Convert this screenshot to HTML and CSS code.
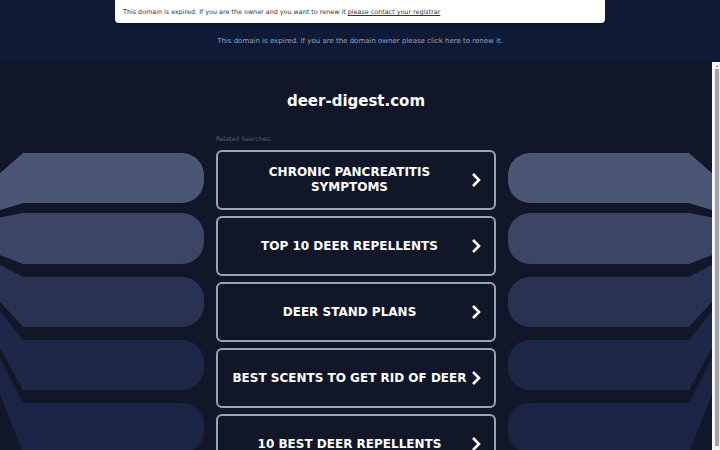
FILE: index.html
```html
<!DOCTYPE html>
<html lang="en">

<head>
    <meta charset="utf-8" />
    <title>deer-digest.com</title>
    <link rel="stylesheet" href="styles.css">
</head>

<body>
    <header class="topBar">
        <div class="notice">This domain is expired. If you are the owner and you want to renew it <a href="#">please contact your registrar</a></div>
        <p class="renew">This domain is expired. If you are the domain owner please click here to renew it.</p>
    </header>
    <div class="frame">
        <main class="scroller">
            <h1 class="siteName">deer-digest.com</h1>
            <div class="listing">
                <p class="related">Related Searches:</p>
                <svg class="deco" viewBox="0 0 216 324" width="216" height="324">
                    <!-- bands fan out from one point off the left edge -->
                    <path fill="#4b5675" d="M-65 80 L23 3 H182 A22 22 0 0 1 204 25 V31 A22 22 0 0 1 182 53 H23 Z" />
                    <path fill="#3c4566" d="M-65 80 L23 63 H182 A22 22 0 0 1 204 85 V92 A22 22 0 0 1 182 114 H23 Z" />
                    <path fill="#2a3253" d="M-65 80 L23 127 H182 A22 22 0 0 1 204 149 V155 A22 22 0 0 1 182 177 H23 Z" />
                    <path fill="#1f2748" d="M-65 80 L23 190 H182 A22 22 0 0 1 204 212 V218 A22 22 0 0 1 182 240 H23 Z" />
                    <path fill="#1c2446" d="M-65 80 L23 253 H182 A22 22 0 0 1 204 275 V281 A22 22 0 0 1 182 303 H23 Z" />
                </svg>
                <div class="results">
                    <a class="result" href="#"><span>CHRONIC PANCREATITIS SYMPTOMS</span><svg class="chev" viewBox="0 0 10 16"><path d="M2 2 L8 8 L2 14" /></svg></a>
                    <a class="result" href="#"><span>TOP 10 DEER REPELLENTS</span><svg class="chev" viewBox="0 0 10 16"><path d="M2 2 L8 8 L2 14" /></svg></a>
                    <a class="result" href="#"><span>DEER STAND PLANS</span><svg class="chev" viewBox="0 0 10 16"><path d="M2 2 L8 8 L2 14" /></svg></a>
                    <a class="result" href="#"><span>BEST SCENTS TO GET RID OF DEER</span><svg class="chev" viewBox="0 0 10 16"><path d="M2 2 L8 8 L2 14" /></svg></a>
                    <a class="result" href="#"><span>10 BEST DEER REPELLENTS</span><svg class="chev" viewBox="0 0 10 16"><path d="M2 2 L8 8 L2 14" /></svg></a>
                </div>
                <svg class="deco flip" viewBox="0 0 216 324" width="216" height="324">
                    <path fill="#4b5675" d="M-65 80 L23 3 H182 A22 22 0 0 1 204 25 V31 A22 22 0 0 1 182 53 H23 Z" />
                    <path fill="#3c4566" d="M-65 80 L23 63 H182 A22 22 0 0 1 204 85 V92 A22 22 0 0 1 182 114 H23 Z" />
                    <path fill="#2a3253" d="M-65 80 L23 127 H182 A22 22 0 0 1 204 149 V155 A22 22 0 0 1 182 177 H23 Z" />
                    <path fill="#1f2748" d="M-65 80 L23 190 H182 A22 22 0 0 1 204 212 V218 A22 22 0 0 1 182 240 H23 Z" />
                    <path fill="#1c2446" d="M-65 80 L23 253 H182 A22 22 0 0 1 204 275 V281 A22 22 0 0 1 182 303 H23 Z" />
                </svg>
            </div>
        </main>
        <div class="scrollbar">
            <div class="arrowUp"></div>
            <div class="thumb"></div>
        </div>
    </div>
</body>

</html>
```

FILE: styles.css
```css
body {
    margin: 0;
    height: 450px;
    overflow: hidden;
    background: #111729;
    font-family: 'DejaVu Sans', sans-serif;
}

.topBar {
    height: 62px;
    background: #0f1a36;
    overflow: hidden;
}

.notice {
    width: 474px;
    height: 23px;
    margin: 0 auto;
    padding: 0 8px;
    background: #ffffff;
    border-radius: 0 0 4px 4px;
    box-shadow: 0 1px 3px rgba(0, 0, 0, 0.5);
    font-size: 6.4px;
    line-height: 24px;
    color: #333333;
}

.notice a {
    color: #333333;
}

.renew {
    margin: 14px 0 0;
    text-align: center;
    font-size: 7px;
    color: #9aa3bb;
}

.frame {
    display: flex;
    height: 388px;
}

.scroller {
    flex: 1;
    overflow: hidden;
}

.scrollbar {
    width: 8px;
    display: flex;
    flex-direction: column;
    align-items: center;
    background: #f3f3f3;
    border-left: 1px solid #fbfbfb;
    box-sizing: border-box;
}

.arrowUp {
    margin: 3px 0 2px;
    width: 0;
    height: 0;
    border-left: 2px solid transparent;
    border-right: 2px solid transparent;
    border-bottom: 2px solid #a4a4a4;
}

.thumb {
    width: 4px;
    flex: 1;
    margin-bottom: 4px;
    background: #a4a4a4;
}

.siteName {
    margin: 0;
    padding-top: 29px;
    text-align: center;
    font-size: 15px;
    line-height: 20px;
    color: #ffffff;
}

.listing {
    display: grid;
    grid-template-columns: 1fr 280px 1fr;
}

.related {
    grid-column: 2;
    margin: 24px 0 8px;
    font-size: 6.2px;
    color: #56607c;
}

.deco {
    grid-row: 2;
    display: block;
}

.deco.flip {
    transform: scaleX(-1);
}

.results {
    grid-row: 2;
    grid-column: 2;
    display: flex;
    flex-direction: column;
    gap: 6px;
}

.result {
    height: 60px;
    box-sizing: border-box;
    display: flex;
    align-items: center;
    gap: 4px;
    padding: 0 13px 0 14px;
    border: 2px solid #9ea3b0;
    border-radius: 6px;
    text-decoration: none;
    color: #ffffff;
}

.result span {
    flex: 1;
    text-align: center;
    font-size: 12px;
    font-weight: bold;
    line-height: 15px;
}

.chev {
    width: 10px;
    height: 16px;
    flex: none;
}

.chev path {
    fill: none;
    stroke: #ffffff;
    stroke-width: 2.6;
}
```
